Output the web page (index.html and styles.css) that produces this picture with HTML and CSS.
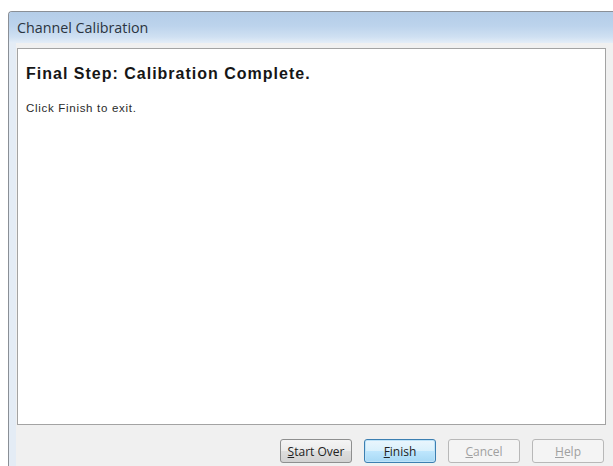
FILE: index.html
```html
<!DOCTYPE html>
<html lang="en">
<head>
<meta charset="utf-8">
<title>Channel Calibration</title>
<link rel="stylesheet" href="styles.css">
</head>
<body>
<div class="window">
  <div class="titlebar">Channel Calibration</div>
  <div class="client">
    <div class="panel">
      <h1 class="step-title">Final Step: Calibration Complete.</h1>
      <p class="step-text">Click Finish to exit.</p>
    </div>
    <div class="buttons">
      <button class="btn"><u>S</u>tart Over</button>
      <button class="btn btn-default"><u>F</u>inish</button>
      <button class="btn" disabled><u>C</u>ancel</button>
      <button class="btn" disabled><u>H</u>elp</button>
    </div>
  </div>
</div>
</body>
</html>
```

FILE: styles.css
```css
html, body {
  margin: 0;
  padding: 0;
  background: #ffffff;
  overflow: hidden;
}

.window {
  margin: 11px 0 0 8px;
  width: 620px;
  height: 455px;
  border: 1px solid #8a8f96;
  border-right: none;
  border-bottom: none;
  border-radius: 4px 0 0 0;
  background: #dfe8f2;
  box-sizing: border-box;
  display: flex;
  flex-direction: column;
}

.titlebar {
  height: 31px;
  flex: none;
  padding-left: 8px;
  display: flex;
  align-items: center;
  font-family: "Open Sans", "Liberation Sans", sans-serif;
  font-size: 14.3px;
  color: #2b3440;
  background: linear-gradient(to bottom, #b4cde8 0%, #bcd3ec 45%, #cfe0f2 80%, #e4edf7 100%);
  border-radius: 3px 0 0 0;
}

.client {
  flex: 1;
  border-left: 7px solid #e4ecf5;
  background: #f0f0f0;
  padding: 5px 0 0 1px;
  display: flex;
  flex-direction: column;
}

.panel {
  width: 589px;
  height: 377px;
  box-sizing: border-box;
  background: #ffffff;
  border: 1px solid #a3a3a3;
  padding: 16px 0 0 8px;
}

.step-title {
  margin: 0;
  font-family: "Liberation Sans", Arial, sans-serif;
  font-weight: bold;
  font-size: 16px;
  letter-spacing: 1px;
  color: #161616;
}

.step-text {
  margin: 19px 0 0 0;
  font-family: "Liberation Sans", Arial, sans-serif;
  font-size: 11.5px;
  letter-spacing: 0.7px;
  color: #2a2a2a;
}

.buttons {
  display: flex;
  gap: 12px;
  margin-top: 14px;
  padding-left: 263px;
}

.btn {
  width: 72px;
  height: 24px;
  padding: 0;
  font-family: "Open Sans", "Liberation Sans", sans-serif;
  font-size: 12px;
  color: #222222;
  border: 1px solid #8e8f8f;
  border-radius: 3px;
  background: linear-gradient(to bottom, #f4f4f4 0%, #ebebeb 50%, #dedede 51%, #d2d2d2 100%);
}

.btn u {
  text-decoration-thickness: 1px;
  text-underline-offset: 1px;
}

.btn-default {
  border-color: #3c7fb1;
  background: linear-gradient(to bottom, #eaf6fd 0%, #d9f0fc 50%, #bee6fd 51%, #a7d9f5 100%);
  box-shadow: inset 0 0 0 1px #bfe3f8;
}

.btn:disabled {
  color: #a0a0a0;
  border-color: #b8b8b8;
  background: #f4f4f4;
}
```
